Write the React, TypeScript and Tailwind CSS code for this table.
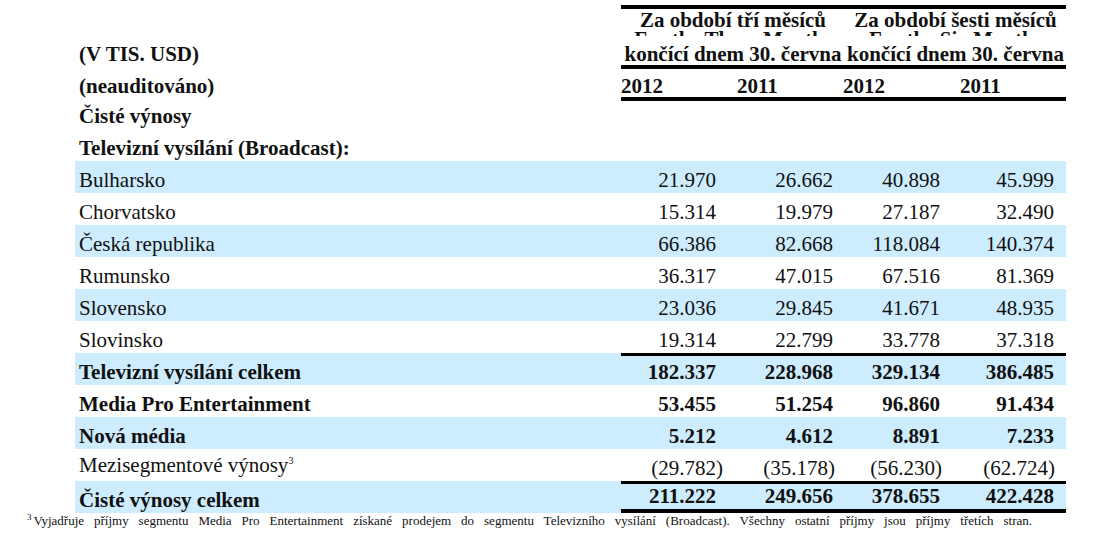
import React from 'react';

type Row = {
  label: React.ReactNode;
  values: string[];
  bold?: boolean;
  band?: boolean;
  topRule?: boolean;
  bottomRule?: boolean;
  paren?: boolean;
};

const rows: Row[] = [
  { label: 'Bulharsko', values: ['21.970', '26.662', '40.898', '45.999'], band: true },
  { label: 'Chorvatsko', values: ['15.314', '19.979', '27.187', '32.490'] },
  { label: 'Česká republika', values: ['66.386', '82.668', '118.084', '140.374'], band: true },
  { label: 'Rumunsko', values: ['36.317', '47.015', '67.516', '81.369'] },
  { label: 'Slovensko', values: ['23.036', '29.845', '41.671', '48.935'], band: true },
  { label: 'Slovinsko', values: ['19.314', '22.799', '33.778', '37.318'] },
  {
    label: 'Televizní vysílání celkem',
    values: ['182.337', '228.968', '329.134', '386.485'],
    bold: true,
    band: true,
    topRule: true,
  },
  { label: 'Media Pro Entertainment', values: ['53.455', '51.254', '96.860', '91.434'], bold: true },
  { label: 'Nová média', values: ['5.212', '4.612', '8.891', '7.233'], bold: true, band: true },
  {
    label: (
      <span>
        Mezisegmentové výnosy
        <span className="text-[10px] relative -top-[8px] align-baseline">3</span>
      </span>
    ),
    values: ['(29.782)', '(35.178)', '(56.230)', '(62.724)'],
    paren: true,
  },
  {
    label: 'Čisté výnosy celkem',
    values: ['211.222', '249.656', '378.655', '422.428'],
    bold: true,
    band: true,
    topRule: true,
    bottomRule: true,
  },
];

const grid = 'grid grid-cols-[546px_107px_117px_107px_114px]';
const parenPad = ['pr-[5px]', 'pr-[10px]', 'pr-[10px]', 'pr-[11px]'];

function HeaderGroup({ title, clipped }: { title: string; clipped: string }) {
  return (
    <div className="flex flex-col items-center whitespace-nowrap">
      <div className="mt-[1px] h-[21px] leading-[21px]">{title}</div>
      <div className="h-[5px] overflow-hidden">
        <div className="-mt-[2px] leading-[21px]">{clipped}</div>
      </div>
      <div className="mt-[8px] h-[21px] leading-[21px]">končící dnem 30. června</div>
    </div>
  );
}

export default function App() {
  return (
    <div className="w-[1109px] h-[539px] bg-white text-[#111] font-[family-name:Liberation_Serif,serif] text-[21px] overflow-hidden">
      {/* header */}
      <div className="ml-[75px] flex h-[69px]">
        <div className="w-[546px] flex items-end pl-[4px] pb-[4px] font-bold leading-[21px]">(V TIS. USD)</div>
        <div className="w-[445px] mt-[5px] border-t-4 border-b-4 border-black grid grid-cols-[224px_221px] font-bold">
          <HeaderGroup title="Za období tří měsíců" clipped="For the Three Months" />
          <HeaderGroup title="Za období šesti měsíců" clipped="For the Six Months" />
        </div>
      </div>

      <div className="ml-[75px] flex h-[32px] font-bold leading-[21px]">
        <div className="w-[546px] flex items-end pl-[4px] pb-[4px]">(neauditováno)</div>
        <div className="w-[445px] flex items-end border-b-4 border-black">
          <div className="w-[116px]">2012</div>
          <div className="w-[106px]">2011</div>
          <div className="w-[117px]">2012</div>
          <div className="flex-1">2011</div>
        </div>
      </div>

      <div className="ml-[75px] h-[28px] flex items-end pl-[4px] pb-[2px] font-bold leading-[21px]">Čisté výnosy</div>
      <div className="ml-[75px] h-[32px] flex items-end pl-[4px] pb-[2px] font-bold leading-[21px]">
        Televizní vysílání (Broadcast):
      </div>

      {/* body */}
      <div className="ml-[75px] w-[991px]">
        {rows.map((r, i) => (
          <div
            key={i}
            className={`${grid} h-[32px] leading-[21px] ${r.band ? 'bg-[#cdecfd]' : ''} ${r.bold ? 'font-bold' : ''}`}
          >
            <div className="flex items-end pl-[4px] pb-[2px] whitespace-nowrap">{r.label}</div>
            {r.values.map((v, j) => (
              <div
                key={j}
                className={`flex items-end justify-end pb-[2px] ${r.paren ? parenPad[j] : 'pr-[12px]'} ${
                  r.topRule ? 'border-t-[3px] border-black' : ''
                } ${r.bottomRule ? 'border-b-4 border-black' : ''}`}
              >
                {v}
              </div>
            ))}
          </div>
        ))}
      </div>

      <div className="pl-[27px] text-[13px] leading-[15px] whitespace-nowrap [word-spacing:6.7px]">
        <span className="text-[9px] relative -top-[5px] mr-[2px]">3</span>
        Vyjadřuje příjmy segmentu Media Pro Entertainment získané prodejem do segmentu Televizního vysílání (Broadcast). Všechny ostatní příjmy jsou příjmy třetích stran.
      </div>
    </div>
  );
}
